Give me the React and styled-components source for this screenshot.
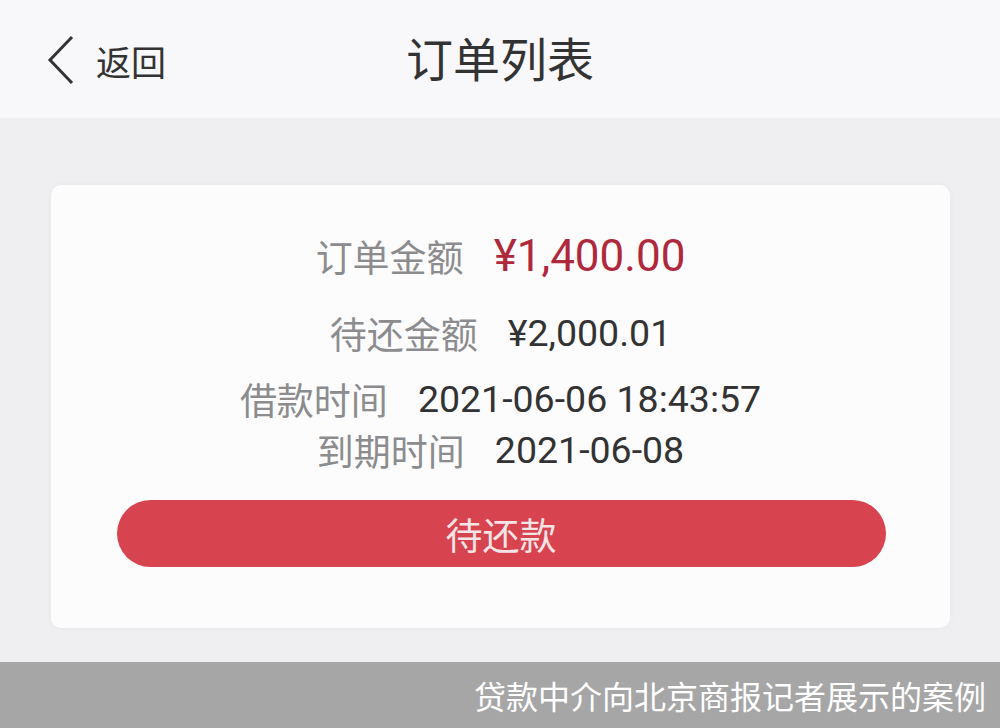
import React from "react";
import styled, { createGlobalStyle } from "styled-components";

const GlobalStyle = createGlobalStyle`
  html, body {
    margin: 0;
    padding: 0;
    background: #efeff1;
  }
  body {
    font-family: "Roboto", "Noto Sans CJK SC", sans-serif;
  }
`;

const Page = styled.div`
  width: 1000px;
  height: 728px;
  display: flex;
  flex-direction: column;
  background: #efeff1;
  overflow: hidden;
`;

const Header = styled.div`
  height: 118px;
  flex-shrink: 0;
  display: flex;
  align-items: center;
  position: relative;
  background: #f8f8fa;
`;

const Back = styled.div`
  display: flex;
  align-items: center;
  gap: 20px;
  padding-left: 46px;
  color: #333;
  font-family: "Noto Sans CJK SC", sans-serif;
  font-size: 35px;
  margin-top: 2px;
`;

const Title = styled.div`
  position: absolute;
  left: 0;
  right: 0;
  text-align: center;
  font-family: "Noto Sans CJK SC", sans-serif;
  font-size: 47px;
  color: #333;
  pointer-events: none;
  margin-top: -6px;
`;

const Main = styled.div`
  flex: 1;
  padding: 67px 50px 0 51px;
`;

const Card = styled.div`
  height: 443px;
  background: #fcfcfd;
  border-radius: 10px;
  box-shadow: 0 0 6px rgba(0, 0, 0, 0.04);
  display: flex;
  flex-direction: column;
  align-items: center;
  padding-top: 34px;
  box-sizing: border-box;
`;

const Row = styled.div`
  display: flex;
  align-items: center;
  gap: 30px;
  height: ${(p) => p.$h}px;
`;

const Label = styled.span`
  font-family: "Noto Sans CJK SC", sans-serif;
  font-size: 37px;
  color: #8c8c8e;
`;

const Value = styled.span`
  font-family: "Roboto", "Noto Sans CJK SC", sans-serif;
  font-size: ${(p) => (p.$big ? 44 : 37.5)}px;
  color: ${(p) => (p.$red ? "#b0283b" : "#333")};
  font-weight: 400;
`;

const PayButton = styled.button`
  margin-top: 25px;
  width: 769px;
  height: 67px;
  border: none;
  border-radius: 34px;
  background: #d7434f;
  color: #f5e4e6;
  font-family: "Noto Sans CJK SC", sans-serif;
  font-size: 37px;
  display: flex;
  align-items: center;
  justify-content: center;
  margin-left: 1px;
`;

const Caption = styled.div`
  height: 66px;
  flex-shrink: 0;
  background: #a6a6a6;
  display: flex;
  align-items: center;
  justify-content: flex-end;
  padding-right: 14px;
  color: #fff;
  font-family: "Noto Sans CJK SC", sans-serif;
  font-size: 32px;
  margin-top: 34px;
`;

const Chevron = () => (
  <svg width="30" height="52" viewBox="0 0 30 52">
    <path d="M26 3 L4 26 L26 49" fill="none" stroke="#333" strokeWidth="3" />
  </svg>
);

export default function App() {
  return (
    <Page>
      <GlobalStyle />
      <Header>
        <Back>
          <Chevron />
          <span>返回</span>
        </Back>
        <Title>订单列表</Title>
      </Header>
      <Main>
        <Card>
          <Row $h={74}>
            <Label>订单金额</Label>
            <Value $big $red>¥1,400.00</Value>
          </Row>
          <Row $h={80}>
            <Label>待还金额</Label>
            <Value>¥2,000.01</Value>
          </Row>
          <Row $h={52}>
            <Label>借款时间</Label>
            <Value>2021-06-06 18:43:57</Value>
          </Row>
          <Row $h={50}>
            <Label>到期时间</Label>
            <Value>2021-06-08</Value>
          </Row>
          <PayButton>待还款</PayButton>
        </Card>
      </Main>
      <Caption>贷款中介向北京商报记者展示的案例</Caption>
    </Page>
  );
}
